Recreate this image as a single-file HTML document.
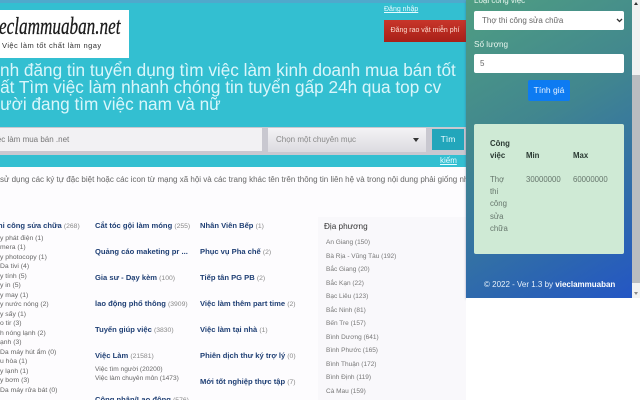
<!DOCTYPE html>
<html lang="vi">
<head>
<meta charset="utf-8">
<title>Việc làm mua bán</title>
<style>
html,body{margin:0;padding:0;width:640px;height:400px;overflow:hidden;background:#fff;font-family:"Liberation Sans","Noto Sans CJK SC",sans-serif}
.a{position:absolute;white-space:nowrap}
#page{position:relative;width:640px;height:400px;overflow:hidden;background:#fdfcfe}
.h{font-size:17.2px;line-height:17px;color:#d9f6fb}
.cat{font-size:7.6px;font-weight:bold;color:#1f3f74}
.cat span{font-weight:normal;color:#888;font-size:6.8px}
.sub{font-size:6.8px;color:#666;left:0}
.sub2{font-size:6.6px;color:#666;left:95px}
.loc{font-size:6.5px;color:#777;left:326px}
.th{font-size:7.8px;line-height:12px;font-weight:bold;color:#2b3a33}
.td{font-size:7.8px;line-height:12px;color:#66766c}
</style>
</head>
<body>
<div id="page">
<div class="a" style="left:0;top:0;width:466px;height:167px;background:#33bfd1"></div>
<div class="a" style="left:0;top:0;width:466px;height:3px;background:#4fa9cc"></div>

<div class="a" style="left:0;top:10px;width:129px;height:48px;background:#fff"></div>
<div class="a" style="left:-1px;top:14px;font:italic 24px 'Liberation Serif',serif;color:#1b1b1b;transform:scaleX(.715);transform-origin:0 0;-webkit-text-stroke:.3px #1b1b1b">eclammuaban.net</div>
<div class="a" style="left:2px;top:41px;font-size:7.5px;color:#333;letter-spacing:.45px">Việc làm tốt chất làm ngay</div>

<div class="a h" style="top:62px;left:-21px">Kênh đăng tin tuyển dụng tìm việc làm kinh doanh mua bán tốt</div>
<div class="a h" style="top:79px;left:-19px">nhất Tìm việc làm nhanh chóng tin tuyển gấp 24h qua top cv</div>
<div class="a h" style="top:96px;left:-19px">người đang tìm việc nam và nữ</div>

<div class="a" style="left:384px;top:6px;font-size:7px;color:#e8fbff;text-decoration:underline">Đăng nhập</div>
<div class="a" style="left:384px;top:20px;width:82px;height:22px;background:linear-gradient(#c8362a,#a82018);color:#fbdcd0;font-size:7px;line-height:21px;text-align:center">Đăng rao vặt miễn phí</div>

<div class="a" style="left:0;top:127px;width:466px;height:28px;background:#c9c8d0"></div>
<div class="a" style="left:0;top:128px;width:262px;height:23px;background:#f2f1f3"></div>
<div class="a" style="left:-5px;top:135px;font-size:8px;color:#777">iệc làm mua bán .net</div>
<div class="a" style="left:268px;top:128px;width:158px;height:24px;background:linear-gradient(#f4f3f5,#dcdbe0)"></div>
<div class="a" style="left:276px;top:135px;font-size:8px;color:#888">Chọn một chuyên mục</div>
<div class="a" style="left:413px;top:138px;width:0;height:0;border-left:3.5px solid transparent;border-right:3.5px solid transparent;border-top:4px solid #333"></div>
<div class="a" style="left:432px;top:129px;width:32px;height:21px;background:#22a6bb;color:#e6fbff;font-size:8.5px;line-height:21px;text-align:center">Tìm</div>
<div class="a" style="left:440px;top:156px;font-size:8px;color:#e6fbff;text-decoration:underline">kiếm</div>

<div class="a" style="left:0;top:175px;font-size:8px;color:#666">sử dụng các ký tự đặc biệt hoặc các icon từ mạng xã hội và các trang khác tên trên thông tin liên hệ và trong nội dung phải giống nhau</div>

<div class="a cat" style="left:-2px;top:221px">hi công sửa chữa <span>(268)</span></div>
<div class="a sub" style="top:235px">y phát điện (1)</div>
<div class="a sub" style="top:244px">mera (1)</div>
<div class="a sub" style="top:254px">y photocopy (1)</div>
<div class="a sub" style="top:263px">Da tivi (4)</div>
<div class="a sub" style="top:273px">y tính (5)</div>
<div class="a sub" style="top:282px">y in (5)</div>
<div class="a sub" style="top:292px">y may (1)</div>
<div class="a sub" style="top:301px">y nước nóng (2)</div>
<div class="a sub" style="top:311px">y sấy (1)</div>
<div class="a sub" style="top:320px">o tir (3)</div>
<div class="a sub" style="top:330px">h nóng lạnh (2)</div>
<div class="a sub" style="top:339px">ạnh (3)</div>
<div class="a sub" style="top:349px">Da máy hút ẩm (0)</div>
<div class="a sub" style="top:358px">u hòa (1)</div>
<div class="a sub" style="top:368px">y lạnh (1)</div>
<div class="a sub" style="top:377px">y bơm (3)</div>
<div class="a sub" style="top:387px">Da máy rửa bát (0)</div>

<div class="a cat" style="left:95px;top:221px">Cắt tóc gội làm móng <span>(255)</span></div>
<div class="a cat" style="left:95px;top:247px">Quảng cáo maketing pr ...</div>
<div class="a cat" style="left:95px;top:273px">Gia sư - Dạy kèm <span>(100)</span></div>
<div class="a cat" style="left:95px;top:299px">lao động phổ thông <span>(3909)</span></div>
<div class="a cat" style="left:95px;top:325px">Tuyển giúp việc <span>(3830)</span></div>
<div class="a cat" style="left:95px;top:351px">Việc Làm <span>(21581)</span></div>
<div class="a sub2" style="top:366px">Việc tìm người (20200)</div>
<div class="a sub2" style="top:375px">Việc làm chuyên môn (1473)</div>
<div class="a cat" style="left:95px;top:395px">Công nhân/Lao động <span>(576)</span></div>

<div class="a cat" style="left:200px;top:221px">Nhân Viên Bếp <span>(1)</span></div>
<div class="a cat" style="left:200px;top:247px">Phục vụ Pha chế <span>(2)</span></div>
<div class="a cat" style="left:200px;top:273px">Tiếp tân PG PB <span>(2)</span></div>
<div class="a cat" style="left:200px;top:299px">Việc làm thêm part time <span>(2)</span></div>
<div class="a cat" style="left:200px;top:325px">Việc làm tại nhà <span>(1)</span></div>
<div class="a cat" style="left:200px;top:351px">Phiên dịch thư ký trợ lý <span>(0)</span></div>
<div class="a cat" style="left:200px;top:377px">Mới tốt nghiệp thực tập <span>(7)</span></div>

<div class="a" style="left:318px;top:217px;width:148px;height:183px;background:#f9f8fb"></div>
<div class="a" style="left:324px;top:222px;font-size:8.2px;color:#333">Địa phương</div>
<div class="a loc" style="top:239px">An Giang (150)</div>
<div class="a loc" style="top:253px">Bà Rịa - Vũng Tàu (192)</div>
<div class="a loc" style="top:266px">Bắc Giang (20)</div>
<div class="a loc" style="top:280px">Bắc Kạn (22)</div>
<div class="a loc" style="top:293px">Bạc Liêu (123)</div>
<div class="a loc" style="top:307px">Bắc Ninh (81)</div>
<div class="a loc" style="top:320px">Bến Tre (157)</div>
<div class="a loc" style="top:334px">Bình Dương (641)</div>
<div class="a loc" style="top:347px">Bình Phước (165)</div>
<div class="a loc" style="top:361px">Bình Thuận (172)</div>
<div class="a loc" style="top:374px">Bình Định (119)</div>
<div class="a loc" style="top:388px">Cà Mau (159)</div>

<!-- extension popup -->
<div class="a" style="left:466px;top:0;width:166px;height:298px;background:linear-gradient(150deg,#4f9e82 0%,#41868f 40%,#2c66b0 80%,#2456c4 100%);box-shadow:0 1px 2px rgba(60,60,120,.5)"></div>
<div class="a" style="left:474px;top:-4px;font-size:8px;color:#e8f5ee">Loại công việc</div>
<div class="a" style="left:474px;top:11px;width:150px;height:19px;background:#fff;border-radius:2px"></div>
<div class="a" style="left:482px;top:16px;font-size:8px;color:#666">Thợ thi công sửa chữa</div>
<svg class="a" style="left:616px;top:18px" width="7" height="5" viewBox="0 0 7 5"><path d="M1 1l2.5 2.5L6 1" fill="none" stroke="#333" stroke-width="1.3"/></svg>
<div class="a" style="left:474px;top:40px;font-size:8.2px;color:#e8f5ee">Số lượng</div>
<div class="a" style="left:474px;top:54px;width:150px;height:19px;background:#fff;border-radius:2px"></div>
<div class="a" style="left:480px;top:59px;font-size:8px;color:#666">5</div>
<div class="a" style="left:528px;top:80px;width:42px;height:21px;background:#0d7bf2;border-radius:2px;color:#e8f3ff;font-size:8.5px;line-height:21px;text-align:center">Tính giá</div>

<div class="a" style="left:474px;top:124px;width:150px;height:130px;background:#cfead5;border-radius:2px"></div>
<div class="a th" style="left:490px;top:138px">Công<br>việc</div>
<div class="a th" style="left:526px;top:150px">Min</div>
<div class="a th" style="left:573px;top:150px">Max</div>
<div class="a td" style="left:490px;top:174px;line-height:12.2px">Thợ<br>thi<br>công<br>sửa<br>chữa</div>
<div class="a td" style="left:526px;top:174px">30000000</div>
<div class="a td" style="left:573px;top:174px">60000000</div>
<div class="a" style="left:484px;top:280px;font-size:8px;color:#e6f0fa">© 2022 - Ver 1.3 by <b style="color:#fff">vieclammuaban</b></div>

<!-- scrollbar -->
<div class="a" style="left:632px;top:0;width:8px;height:298px;background:#f1f1f1"></div>
<div class="a" style="left:632px;top:75px;width:8px;height:208px;background:#b9bcc0"></div>
<div class="a" style="left:634px;top:2px;width:0;height:0;border-left:2px solid transparent;border-right:2px solid transparent;border-bottom:3px solid #333"></div>
<div class="a" style="left:634px;top:292px;width:0;height:0;border-left:2px solid transparent;border-right:2px solid transparent;border-top:3px solid #888"></div>
<div class="a" style="left:466px;top:298px;width:174px;height:102px;background:#fff"></div>
</div>
</body>
</html>
